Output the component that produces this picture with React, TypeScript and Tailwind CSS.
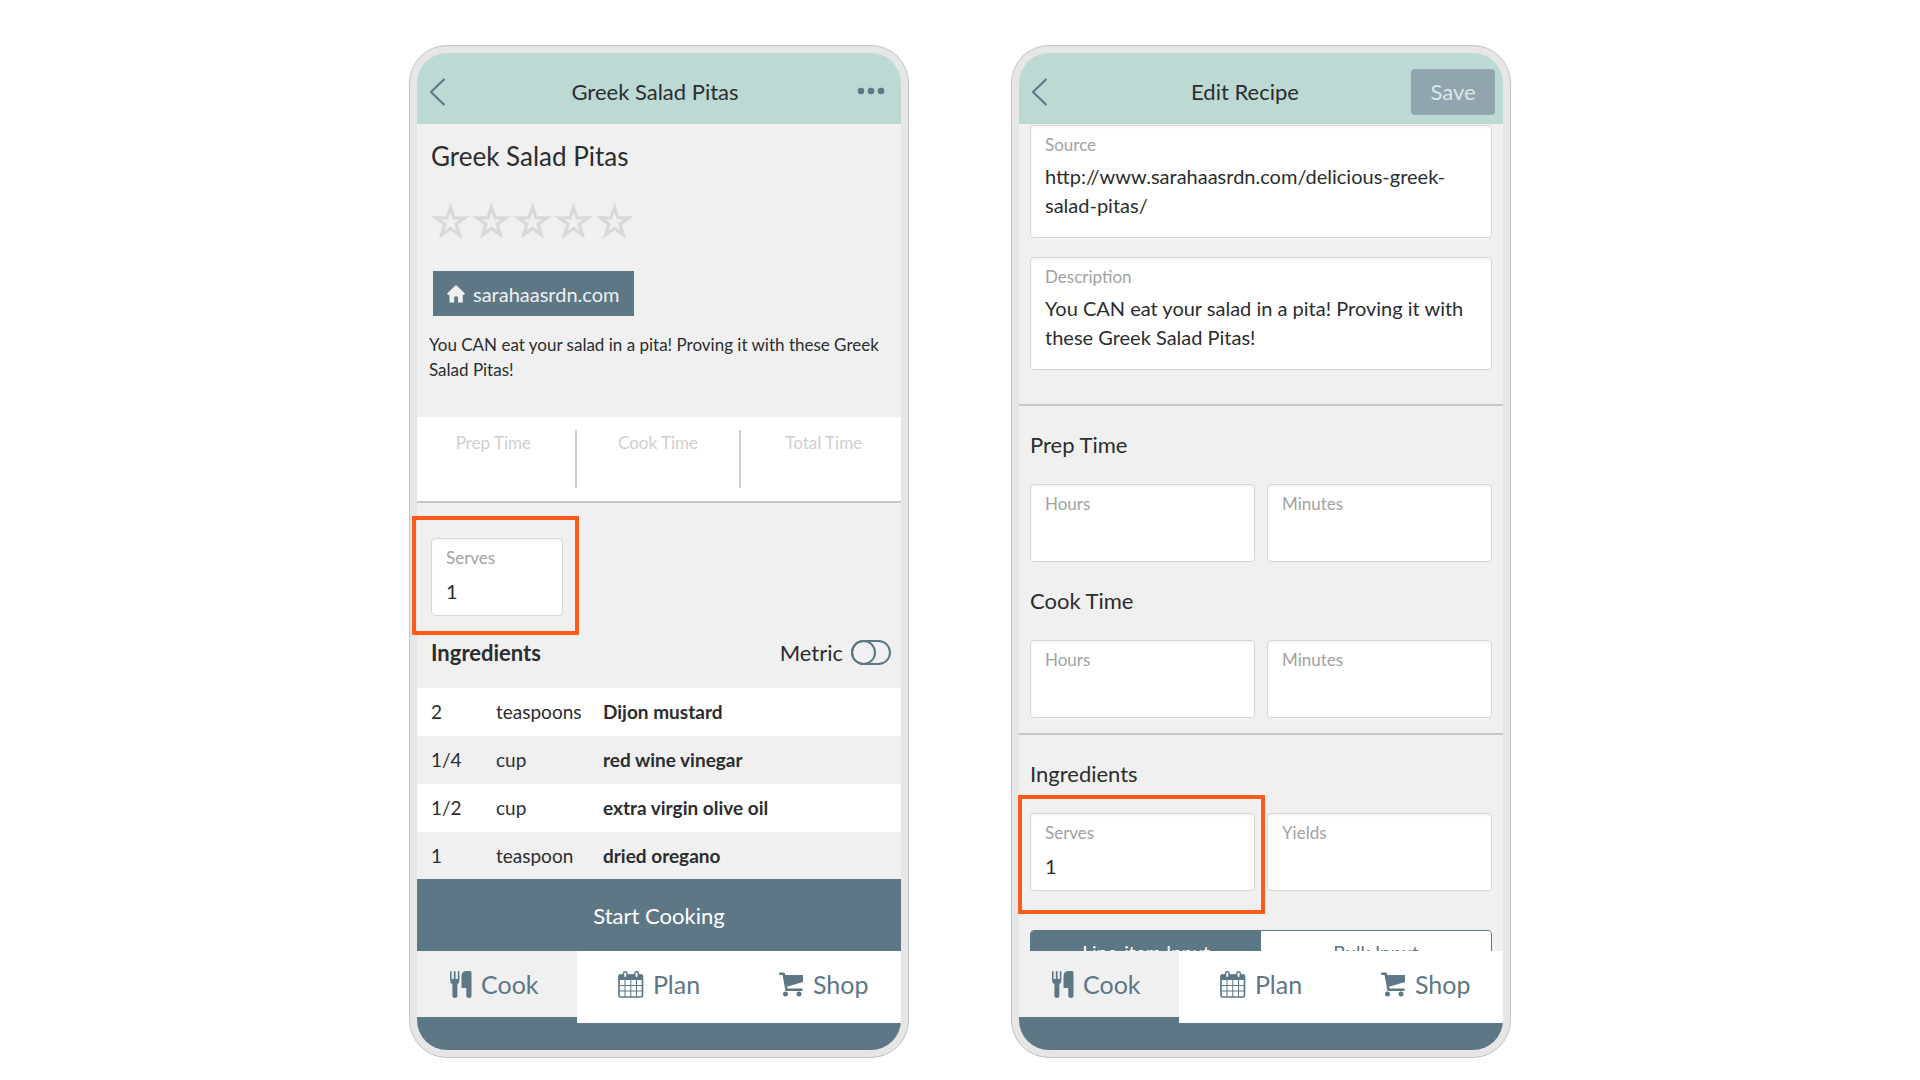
import { ReactNode, useState } from "react";
import clsx from "clsx";

interface FieldProps {
  id: string;
  label: string;
  value?: string;
  multiline?: boolean;
}

interface Ingredient {
  amount: string;
  unit: string;
  name: string;
}

const ingredients: Ingredient[] = [
  { amount: "2", unit: "teaspoons", name: "Dijon mustard" },
  { amount: "1/4", unit: "cup", name: "red wine vinegar" },
  { amount: "1/2", unit: "cup", name: "extra virgin olive oil" },
  { amount: "1", unit: "teaspoon", name: "dried oregano" },
];

const times = ["Prep Time", "Cook Time", "Total Time"];

const CutleryIcon = () => (
  <svg viewBox="0 0 22 27" className="h-[27px] w-[22px]" fill="currentColor">
    <path d="M0 1 Q0 0 .8 0 T1.6 1V8H3.8V1Q3.8 0 4.700 0T5.600 1V8H7.800V1Q7.800 0 8.600 0T9.400 1V9Q9.400 12 7.400 13V25Q7.400 27 5 27T2.400 25V13Q0 12 0 9Z" />
    <path d="M16 0H20Q21.500 0 21.500 1.500V25Q21.500 27 18.900 27T16.300 25V17H12.500Q11.500 17 11.500 16V6Q11.500 0 16 0Z" />
  </svg>
);

const CalendarIcon = () => (
  <svg viewBox="0 0 26 27" className="h-[27px] w-[26px]" fill="none" stroke="currentColor">
    <rect x="1" y="4" width="23.500" height="22" rx="1.500" strokeWidth="1.700" />
    <path d="M1 4H24.500V8.500H1Z" fill="currentColor" />
    <path d="M1 14.500H24.500M1 20H24.500M7 9V26M12.800 9V26M18.500 9V26" strokeWidth="1" />
    <rect x="5.500" y=".8" width="3.500" height="6" rx="1.700" fill="#fff" strokeWidth="1.500" />
    <rect x="16.800" y=".8" width="3.500" height="6" rx="1.700" fill="#fff" strokeWidth="1.500" />
  </svg>
);

const CartIcon = () => (
  <svg viewBox="0 0 25 25" className="h-[25px] w-[25px]" fill="currentColor">
    <path d="M1 .500H5.500L6.300 3H24V10L8 14.800L8.500 16.500H23.500V19H6.500L3.500 3H1Q0 3 0 1.700T1 .500Z" />
    <circle cx="6.500" cy="22" r="2.500" />
    <circle cx="20" cy="22" r="2.500" />
  </svg>
);

const tabs = [
  { name: "Cook", icon: <CutleryIcon /> },
  { name: "Plan", icon: <CalendarIcon /> },
  { name: "Shop", icon: <CartIcon /> },
];

const Field = ({ id, label, value = "", multiline }: FieldProps) => {
  const [text, setText] = useState(value);
  const inputClass =
    "mt-[7px] block w-full resize-none overflow-hidden bg-transparent text-xl leading-[29px] text-[#2b2d2f] outline-none";

  return (
    <div className="rounded border border-[#d5d7d7] bg-white px-[14px] pt-[9px] pb-2 shadow-[inset_0_2px_2px_rgba(0,0,0,0.04)]">
      <label htmlFor={id} className="block text-[17px] leading-5 text-[#a2a2a2]">
        {label}
      </label>
      {multiline ? (
        <textarea
          id={id}
          value={text}
          onChange={(e) => setText(e.target.value)}
          className={clsx(inputClass, "h-[67px]")}
        />
      ) : (
        <input
          id={id}
          type="text"
          value={text}
          onChange={(e) => setText(e.target.value)}
          className={clsx(inputClass, "h-8")}
        />
      )}
    </div>
  );
};

const BackButton = () => (
  <button type="button" aria-label="Back" className="w-[60px] pl-[13px] text-[#5d7785]">
    <svg viewBox="0 0 16 28" className="h-7 w-4" fill="none" stroke="currentColor" strokeWidth="2">
      <path d="M14.500 1L1 14L14.500 27" />
    </svg>
  </button>
);

const Header = ({ title, action }: { title: string; action: ReactNode }) => (
  <header className="flex h-[71px] shrink-0 items-center rounded-t-[30px] bg-[#bcd9d3] pt-[6px]">
    <BackButton />
    <h1 className="flex-1 text-center text-[22px] leading-7">{title}</h1>
    {action}
  </header>
);

const TabBar = () => (
  <nav className="shrink-0 overflow-hidden rounded-b-[30px] bg-[#5d7785] pb-[27px]">
    <div className="-mx-[5px] grid grid-cols-3">
      {tabs.map((tab, i) => (
        <a
          key={tab.name}
          href="#"
          className={clsx(
            "flex h-[72px] items-center justify-center gap-[9px] text-[25px] leading-8 text-[#5d7785]",
            i === 0 ? "border-b-[6px] border-[#5d7785] bg-[#f0f0f0]" : "bg-white pb-[6px]"
          )}
        >
          {tab.icon}
          {tab.name}
        </a>
      ))}
    </div>
  </nav>
);

const Phone = ({ children }: { children: ReactNode }) => (
  <section className="w-full max-w-[500px] rounded-[38px] border border-[#c2c2c2] bg-[#e6e6e6] p-[7px]">
    <div className="flex h-full flex-col rounded-[30px] bg-[#f0f0f0]">{children}</div>
  </section>
);

const Stars = () => (
  <div className="mt-[31px] flex gap-1 pl-px">
    {[1, 2, 3, 4, 5].map((n) => (
      <button key={n} type="button" aria-label={`${n} stars`}>
        <svg viewBox="0 0 37 36" className="h-9 w-[37px]" fill="none" stroke="#d7d9d9" strokeWidth="3.200">
          <path d="M18.500 4.500L22.100 14.900H32.800L24.100 21.200L27.300 31.700L18.500 25.400L9.700 31.700L12.900 21.200L4.200 14.900H14.900Z" />
        </svg>
      </button>
    ))}
  </div>
);

const RecipeScreen = () => {
  const [metric, setMetric] = useState(false);

  return (
    <Phone>
      <Header
        title="Greek Salad Pitas"
        action={
          <button type="button" aria-label="More" className="w-[68px] pl-6 text-[#5d7785]">
            <svg viewBox="0 0 28 8" className="mb-[2px] h-2 w-7" fill="currentColor">
              <circle cx="4" cy="4" r="3.300" />
              <circle cx="14" cy="4" r="3.300" />
              <circle cx="24" cy="4" r="3.300" />
            </svg>
          </button>
        }
      />
      {/* only clipped vertically, the highlight hangs over the side of the screen */}
      <div className="min-h-0 flex-1 overflow-y-clip">
        <div className="pr-[14px] pl-3 pt-4">
          <h2 className="pl-[2px] text-[26px] leading-8">Greek Salad Pitas</h2>
          <div className="pl-[2px]">
            <Stars />
          </div>
          <a
            href="#"
            className="mt-8 ml-1 flex h-[45px] w-fit items-center gap-2 bg-[#5d7785] px-[14px] text-xl text-[#f0f0f0]"
          >
            <svg viewBox="0 0 18 18" className="h-[18px] w-[18px]" fill="currentColor">
              <path d="M9 0L18 8.500L17 10H15.800V17.500H11V11.500H7.200V17.500H2.500V10H1L0 8.500Z" />
            </svg>
            sarahaasrdn.com
          </a>
          <p className="mt-4 text-[17px] leading-[25px]">
            You CAN eat your salad in a pita! Proving it with these Greek Salad Pitas!
          </p>
        </div>

        <div className="mt-[35px] overflow-hidden border-b-2 border-[#c8c8c8] bg-white">
          <div className="-mx-[5px] grid grid-cols-3 divide-x-2 divide-[#cfcfcf] py-[13px]">
            {times.map((time) => (
              <div key={time} className="h-[58px] pt-[3px] text-center text-[17px] leading-5 text-[#cfcfcf]">
                {time}
              </div>
            ))}
          </div>
        </div>

        <div className="px-[14px] pt-[35px]">
          <div className="relative w-[132px]">
            <Field id="recipe-serves" label="Serves" value="1" />
            <div className="pointer-events-none absolute -top-[22px] -right-4 -bottom-[19px] -left-[19px] border-4 border-[#ff5a17]" />
          </div>
        </div>

        <div className="flex h-[72px] items-center justify-between pr-[10px] pl-[14px] text-[22px]">
          <h3 className="font-bold">Ingredients</h3>
          <label className="flex items-center gap-2">
            Metric
            <input
              type="checkbox"
              checked={metric}
              onChange={(e) => setMetric(e.target.checked)}
              className="peer sr-only"
            />
            <span className="flex h-[25px] w-10 rounded-full border-2 border-[#5d7785] peer-checked:justify-end">
              <span className="-m-[2px] h-[25px] w-[25px] rounded-full border-2 border-[#5d7785]" />
            </span>
          </label>
        </div>

        <table className="w-full table-fixed text-left text-[19px] leading-7">
          <tbody>
            {ingredients.map((item) => (
              <tr key={item.name} className="h-12 odd:bg-white">
                <td className="w-[79px] pl-[14px]">{item.amount}</td>
                <td className="w-[107px]">{item.unit}</td>
                <td className="font-bold">{item.name}</td>
              </tr>
            ))}
          </tbody>
        </table>
      </div>
      <button type="button" className="relative h-[72px] shrink-0 bg-[#5d7785] text-[22px] text-white">
        Start Cooking
      </button>
      <TabBar />
    </Phone>
  );
};

const EditScreen = () => (
  <Phone>
    <Header
      title="Edit Recipe"
      action={
        <button type="button" className="mr-2 h-[46px] w-[84px] rounded bg-[#90a5ad] text-[22px] text-[#dbe9e8]">
          Save
        </button>
      }
    />
    <form className="min-h-0 flex-1 overflow-y-clip">
      <div className="flex flex-col gap-[19px] px-[11px] pt-px pb-[34px]">
        <Field id="source" label="Source" value="http://www.sarahaasrdn.com/delicious-greek-salad-pitas/" multiline />
        <Field
          id="description"
          label="Description"
          value="You CAN eat your salad in a pita! Proving it with these Greek Salad Pitas!"
          multiline
        />
      </div>

      <div className="border-y-2 border-[#c8c8c8] px-[11px] pb-[15px]">
        {["Prep Time", "Cook Time"].map((time) => (
          <fieldset key={time} className="pt-[25px]">
            <legend className="float-left w-full text-[22px] leading-7">{time}</legend>
            <div className="clear-both grid grid-cols-2 gap-3 pt-[25px]">
              <Field id={`${time}-hours`} label="Hours" />
              <Field id={`${time}-minutes`} label="Minutes" />
            </div>
          </fieldset>
        ))}
      </div>

      <div className="px-[11px] pt-[25px]">
        <h2 className="text-[22px] leading-7">Ingredients</h2>
        <div className="grid grid-cols-2 gap-3 pt-[25px]">
          <div className="relative">
            <Field id="edit-serves" label="Serves" value="1" />
            <div className="pointer-events-none absolute -top-[18px] -right-[10px] -bottom-[23px] -left-3 border-4 border-[#ff5a17]" />
          </div>
          <Field id="yields" label="Yields" />
        </div>
        <div className="mt-[39px] grid h-[46px] grid-cols-2 overflow-hidden rounded border border-[#5d7785] text-[19px]">
          <button type="button" className="bg-[#5d7785] text-white">
            Line-item Input
          </button>
          <button type="button" className="bg-white text-[#5d7785]">
            Bulk Input
          </button>
        </div>
      </div>
    </form>
    <TabBar />
  </Phone>
);

export default function App() {
  return (
    <main className="flex h-screen justify-center gap-[102px] bg-white px-8 pt-[45px] pb-[22px] font-[Lato,'Open_Sans',sans-serif] text-[#2b2d2f]">
      <RecipeScreen />
      <EditScreen />
    </main>
  );
}
